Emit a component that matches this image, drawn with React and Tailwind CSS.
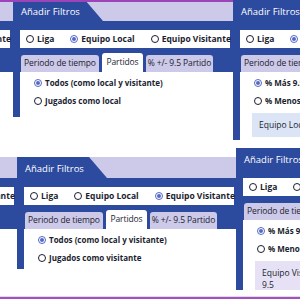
import React from "react";

// radio circle: checked = blue ring + dot
function Dot({ on }) {
  if (on) {
    return (
      <span className="flex h-[8px] w-[8px] shrink-0 items-center justify-center rounded-full border border-[#5468c6]">
        <span className="h-[4px] w-[4px] rounded-full bg-[#5468c6]" />
      </span>
    );
  }
  return <span className="h-[8px] w-[8px] shrink-0 rounded-full border-[1.5px] border-[#1b1e30]" />;
}

const TABS = [
  ["Periodo de tiempo", "w-[78px]"],
  ["Partidos", "w-[41px]"],
  ["% +/- 9.5 Partido", "w-[67px]"],
];

function Widget({ pos, team, tab, items, box, boxTone, bodyH }) {
  return (
    <div className={`absolute w-[220px] overflow-hidden ${pos}`}>
      {/* cabecera */}
      <div className="relative h-[21px] bg-[#cdc9e8]">
        <div className="absolute inset-y-0 left-0 w-[90px] bg-[#2c4a9e] [clip-path:polygon(0_0,72px_0,100%_100%,0_100%)]" />
        <span className="relative block whitespace-nowrap pl-[8px] text-[9.5px] font-medium leading-[24px] text-white">
          Añadir Filtros
        </span>
      </div>

      <div className="bg-[#2c4a9e] pl-[7px] pr-[3px] pt-[9px]">
        <div className="flex h-[18px] items-center gap-[16px] bg-white pl-[6px] text-[8.5px] font-bold text-[#1b1e30]">
          {["Liga", "Equipo Local", "Equipo Visitante"].map((t) => (
            <div key={t} className="flex items-center gap-[3px] whitespace-nowrap">
              <Dot on={team === t} />
              <span>{t}</span>
            </div>
          ))}
        </div>
        <div className="flex h-[24px] items-end gap-[3px] pl-[1px]">
          {TABS.map(([t, w]) => (
            <div
              key={t}
              className={`${w} flex shrink-0 items-center justify-center whitespace-nowrap rounded-t-[3px] text-[8.5px] font-medium tracking-[-0.1px] text-[#1b1e30] ${
                tab === t ? "h-[19px] bg-white" : "h-[17px] bg-[#cdc9e8]"
              }`}
            >
              {t}
            </div>
          ))}
        </div>
      </div>

      {/* contenido */}
      <div className={`border-l-[7px] border-[#2c4a9e] bg-white pl-[14px] pt-[2px] ${bodyH}`}>
        {items.map(([t, on]) => (
          <div key={t} className="flex h-[18px] items-center gap-[3px] whitespace-nowrap text-[8px] font-bold text-[#1b1e30]">
            <Dot on={on} />
            <span>{t}</span>
          </div>
        ))}
        {box && (
          <div
            className={`-ml-[2px] mt-[3px] w-[190px] px-[7px] py-[6px] text-[8.5px] font-medium leading-[12px] text-[#1b1e30] ${
              boxTone === "blue" ? "bg-[#dbe5f5]" : "bg-[#e6e1f4]"
            }`}
          >
            {box}
          </div>
        )}
      </div>
    </div>
  );
}

export default function App() {
  const local = [
    ["Todos (como local y visitante)", true],
    ["Jugados como local", false],
  ];
  const visit = [
    ["Todos (como local y visitante)", true],
    ["Jugados como visitante", false],
  ];
  const goals = [
    ["% Más 9.5 Partido", true],
    ["% Menos 9.5 Partido", false],
  ];

  return (
    <div className="relative h-[300px] w-[300px] overflow-hidden bg-white font-['Open_Sans','Noto_Sans',sans-serif]">
      <Widget pos="left-[-207px] top-0" team="Equipo Local" tab="Partidos" items={local} bodyH="h-[45px]" />
      <Widget pos="left-[13px] top-0" team="Equipo Local" tab="Partidos" items={local} bodyH="h-[45px]" />
      <Widget
        pos="left-[233px] top-0"
        team="Equipo Local"
        tab="% +/- 9.5 Partido"
        items={goals}
        box="Equipo Local +/- 9.5 Partido"
        boxTone="blue"
        bodyH="h-[68px]"
      />

      <Widget pos="left-[-203px] top-[157px]" team="Equipo Visitante" tab="Partidos" items={visit} bodyH="h-[40px]" />
      <Widget pos="left-[17px] top-[157px]" team="Equipo Visitante" tab="Partidos" items={visit} bodyH="h-[40px]" />
      <Widget
        pos="left-[236px] top-[148px]"
        team="Equipo Visitante"
        tab="% +/- 9.5 Partido"
        items={goals}
        box={
          <>
            Equipo Visitante +/- Goles por Partido
            <br />
            9.5
          </>
        }
        boxTone="lavender"
        bodyH="h-[70px]"
      />

      {/* bordes del collage */}
      <div className="absolute left-0 top-0 h-[2px] w-[233px] bg-[#9d45b8]" />
      <div className="absolute bottom-[3px] left-0 h-px w-full bg-[#dcdce6]" />
      <div className="absolute bottom-px left-0 h-[2px] w-full bg-[#a64fbf]" />
    </div>
  );
}
